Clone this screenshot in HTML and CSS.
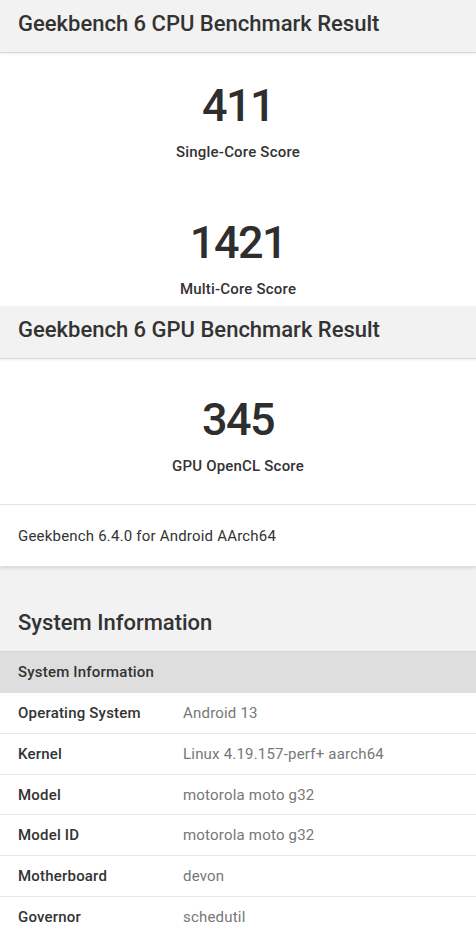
FILE: index.html
```html
<!DOCTYPE html>
<html lang="en">
<head>
<meta charset="utf-8">
<title>Geekbench 6 Result</title>
<link rel="stylesheet" href="styles.css">
</head>
<body>
<div class="page">
  <div class="section-header"><h2 class="section-title">Geekbench 6 CPU Benchmark Result</h2></div>
  <div class="card cpu-card">
    <div class="score-block">
      <div class="score">411</div>
      <div class="score-label">Single-Core Score</div>
    </div>
    <div class="score-block second">
      <div class="score">1421</div>
      <div class="score-label">Multi-Core Score</div>
    </div>
  </div>
  <div class="section-header"><h2 class="section-title">Geekbench 6 GPU Benchmark Result</h2></div>
  <div class="card gpu-card">
    <div class="score-block gpu-block">
      <div class="score">345</div>
      <div class="score-label">GPU OpenCL Score</div>
    </div>
    <div class="card-footer">Geekbench 6.4.0 for Android AArch64</div>
  </div>
  <div class="section-header sys-header"><h2 class="section-title">System Information</h2></div>
  <div class="table">
    <div class="table-head">System Information</div>
    <div class="row"><div class="key">Operating System</div><div class="val">Android 13</div></div>
    <div class="row"><div class="key">Kernel</div><div class="val">Linux 4.19.157-perf+ aarch64</div></div>
    <div class="row"><div class="key">Model</div><div class="val">motorola moto g32</div></div>
    <div class="row"><div class="key">Model ID</div><div class="val">motorola moto g32</div></div>
    <div class="row"><div class="key">Motherboard</div><div class="val">devon</div></div>
    <div class="row"><div class="key">Governor</div><div class="val">schedutil</div></div>
  </div>
</div>
</body>
</html>
```

FILE: styles.css
```css
html, body {
  margin: 0;
  padding: 0;
}
body {
  background: #f2f2f2;
  font-family: Roboto, "Noto Sans", "Liberation Sans", sans-serif;
  color: #333333;
}
.page {
  display: flex;
  flex-direction: column;
}
.section-header {
  background: #f2f2f2;
  padding: 10px 18px 14px;
  border-bottom: 1px solid #d9d9d9;
  box-shadow: 0 1px 2px rgba(0, 0, 0, 0.08);
  position: relative;
  z-index: 1;
}
.section-title {
  margin: 0;
  font-size: 22px;
  line-height: 28px;
  font-weight: 500;
  color: #333333;
}
.card {
  background: #ffffff;
}
.cpu-card {
  padding: 25px 0 7px;
}
.score-block {
  display: flex;
  flex-direction: column;
  align-items: center;
  gap: 8px;
}
.score-block.second {
  margin-top: 53px;
}
.score {
  font-size: 45px;
  line-height: 56px;
  font-weight: 500;
  letter-spacing: -1.5px;
  color: #2e2e2e;
}
.score-label {
  font-size: 15px;
  line-height: 20px;
  font-weight: 500;
  letter-spacing: 0.2px;
  color: #333333;
}
.gpu-card {
  box-shadow: 0 2px 4px rgba(0, 0, 0, 0.12);
}
.gpu-block {
  padding: 33px 0 28px;
  gap: 8px;
  border-bottom: 1px solid #e3e3e3;
}
.card-footer {
  padding: 21px 18px 20px;
  font-size: 15px;
  line-height: 20px;
  letter-spacing: 0.2px;
  color: #333333;
}
.sys-header {
  margin-top: 33px;
  box-shadow: none;
  border-bottom: 1px solid #d6d6d6;
}
.table {
  display: flex;
  flex-direction: column;
  background: #ffffff;
}
.table-head {
  background: #dedede;
  padding: 10px 18px 11px;
  font-size: 15px;
  line-height: 20px;
  font-weight: 500;
  letter-spacing: 0.2px;
  color: #333333;
}
.row {
  display: grid;
  grid-template-columns: 165px 1fr;
  padding: 10px 18px 9.8px;
  font-size: 15px;
  line-height: 20px;
  letter-spacing: 0.2px;
  border-bottom: 1px solid #e6e6e6;
}
.key {
  font-weight: 500;
  color: #333333;
}
.val {
  color: #777777;
}
```
